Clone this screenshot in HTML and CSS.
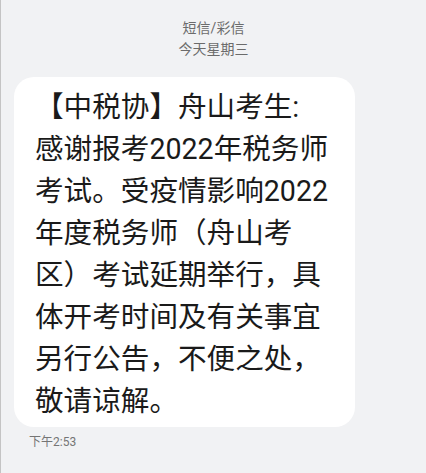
FILE: index.html
```html
<!DOCTYPE html>
<html lang="zh-CN">
<head>
    <meta charset="UTF-8">
    <meta name="viewport" content="width=device-width, initial-scale=1.0">
    <title>短信/彩信</title>
    <link rel="stylesheet" href="styles.css">
</head>
<body>
    <div class="header">
        <div class="type">短信/彩信</div>
        <div class="day">今天星期三</div>
    </div>

    <div class="message">
        <div class="bubble">
            【中税协】舟山考生:<br>
            感谢报考2022年税务师<br>
            考试。受疫情影响2022<br>
            年度税务师（舟山考<br>
            区）考试延期举行，具<br>
            体开考时间及有关事宜<br>
            另行公告，不便之处，<br>
            敬请谅解。
        </div>
        <div class="time">下午2:53</div>
    </div>
</body>
</html>
```

FILE: styles.css
```css
body {
    font-family: Roboto, "Noto Sans CJK SC", sans-serif;
    margin: 0;
    min-height: 473px;
    box-sizing: border-box;
    background-color: #f1f2f4;
    border-left: 1px solid #c4c4c4;
}
.header {
    text-align: center;
    color: #6b6b6b;
    font-size: 14px;
    line-height: 21px;
    padding-top: 18px;
}
.message {
    padding: 17px 0 0 13px;
}
.bubble {
    width: 341px;
    box-sizing: border-box;
    background-color: #fff;
    border-radius: 20px;
    padding: 9px 10px 5px 21px;
    color: #1a1a1a;
    font-size: 28.6px;
    line-height: 42px;
    white-space: nowrap;
}
.time {
    font-size: 12px;
    color: #757575;
    padding: 5px 0 0 15px;
}
```
